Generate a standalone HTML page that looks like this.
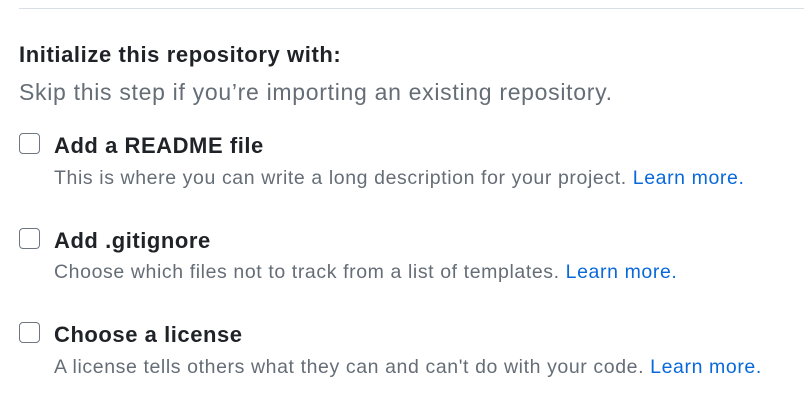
<!DOCTYPE html>
<html><head><style>
body{margin:0;width:804px;height:410px;background:#fff;font-family:"Liberation Sans",sans-serif;position:relative;overflow:hidden}
.hr{position:absolute;left:19px;right:0;top:8px;height:1px;background:#d8dee4}
.t{position:absolute;white-space:nowrap}
.h{left:19px;top:42px;font-size:22px;font-weight:bold;color:#1f2328;letter-spacing:0.6px}
.s{left:19px;top:79px;font-size:23px;color:#656d76;letter-spacing:0.7px}
.cb{position:absolute;left:19px;width:19px;height:19px;border:1px solid #6e7781;border-radius:4px}
.l{left:54px;font-size:22px;font-weight:bold;color:#1f2328;letter-spacing:0.55px}
.d{left:54px;font-size:19.5px;color:#656d76;letter-spacing:0.6px}
a{color:#0969da;text-decoration:none}
</style></head><body>
<div class="hr"></div>
<div class="t h">Initialize this repository with:</div>
<div class="t s">Skip this step if you’re importing an existing repository.</div>
<div class="cb" style="top:133px"></div>
<div class="t l" style="top:133px">Add a README file</div>
<div class="t d" style="top:167px">This is where you can write a long description for your project. <a>Learn more.</a></div>
<div class="cb" style="top:228px"></div>
<div class="t l" style="top:228px">Add .gitignore</div>
<div class="t d" style="top:261px">Choose which files not to track from a list of templates. <a>Learn more.</a></div>
<div class="cb" style="top:322px"></div>
<div class="t l" style="top:322px">Choose a license</div>
<div class="t d" style="top:356px">A license tells others what they can and can't do with your code. <a>Learn more.</a></div>
</body></html>
